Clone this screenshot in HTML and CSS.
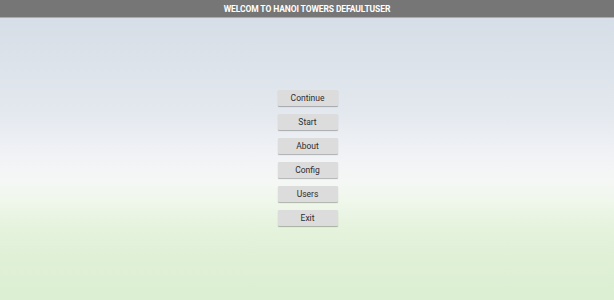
FILE: index.html
```html
<!DOCTYPE html>
<html>
<head>
<meta charset="utf-8">
<link rel="stylesheet" href="styles.css">
</head>
<body>
<div class="screen">
  <header class="titlebar">WELCOM TO HANOI TOWERS DEFAULTUSER</header>
  <main class="menu">
    <button class="btn">Continue</button>
    <button class="btn">Start</button>
    <button class="btn">About</button>
    <button class="btn">Config</button>
    <button class="btn">Users</button>
    <button class="btn">Exit</button>
  </main>
</div>
</body>
</html>
```
FILE: styles.css
```css
html, body {
  margin: 0;
  padding: 0;
  width: 614px;
  height: 300px;
  overflow: hidden;
}
.screen {
  width: 614px;
  height: 300px;
  display: flex;
  flex-direction: column;
  background: linear-gradient(to bottom,
    #d3dce6 0px,
    #d9e0e8 40px,
    #e3e8ee 110px,
    #eff1f5 150px,
    #f5f7f6 180px,
    #f0f7ec 200px,
    #e6f3de 225px,
    #dff0d6 260px,
    #dcefd2 300px);
  font-family: Roboto, "Liberation Sans", sans-serif;
}
.titlebar {
  height: 18px;
  flex: none;
  background: #767676;
  border-bottom: 1px solid #a9adb2;
  box-sizing: border-box;
  color: #ffffff;
  font-size: 8.5px;
  font-weight: bold;
  line-height: 18px;
  text-align: center;
  letter-spacing: -0.1px;
}
.menu {
  display: flex;
  flex-direction: column;
  align-items: center;
  gap: 8px;
  padding-top: 72px;
}
.btn {
  width: 60px;
  height: 16px;
  margin-left: 1px;
  padding: 0;
  border: none;
  border-radius: 1px;
  background: #dcdcdc;
  box-shadow: 0 1px 1px rgba(0,0,0,0.28);
  color: #2e2e2e;
  font-family: Roboto, "Liberation Sans", sans-serif;
  font-size: 8.5px;
  line-height: 16px;
  text-align: center;
}
```
